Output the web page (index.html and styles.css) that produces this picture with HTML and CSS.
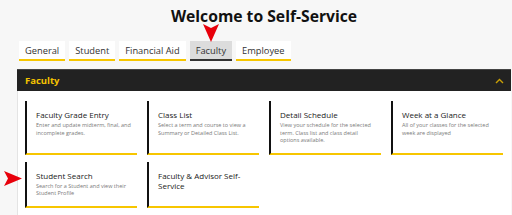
FILE: index.html
```html
<!DOCTYPE html>
<html lang="en">
<head>
<meta charset="utf-8">
<title>Welcome to Self-Service</title>
<link rel="stylesheet" href="styles.css">
</head>
<body>
<h1 class="title">Welcome to Self-Service</h1>
<nav class="tabs">
  <a class="tab">General</a>
  <a class="tab">Student</a>
  <a class="tab">Financial Aid</a>
  <a class="tab active">Faculty</a>
  <a class="tab">Employee</a>
</nav>
<section class="panel">
  <header class="panel-head">
    <span class="panel-title">Faculty</span>
    <svg class="chevron" width="9" height="6" viewBox="0 0 9 6"><polyline points="1,5 4.5,1.5 8,5" fill="none" stroke="#c9a006" stroke-width="1.4"/></svg>
  </header>
  <div class="panel-body">
    <div class="card">
      <div class="card-title">Faculty Grade Entry</div>
      <div class="card-desc">Enter and update midterm, final, and<br>incomplete grades.</div>
    </div>
    <div class="card">
      <div class="card-title">Class List</div>
      <div class="card-desc">Select a term and course to view a<br>Summary or Detailed Class List.</div>
    </div>
    <div class="card">
      <div class="card-title">Detail Schedule</div>
      <div class="card-desc">View your schedule for the selected<br>term. Class list and class detail<br>options available.</div>
    </div>
    <div class="card">
      <div class="card-title">Week at a Glance</div>
      <div class="card-desc">All of your classes for the selected<br>week are displayed</div>
    </div>
    <div class="card">
      <div class="card-title">Student Search</div>
      <div class="card-desc">Search for a Student and view their<br>Student Profile</div>
    </div>
    <div class="card">
      <div class="card-title">Faculty &amp; Advisor Self-<br>Service</div>
    </div>
  </div>
</section>
<svg class="pointer pointer-down" width="16" height="18" viewBox="0 0 16 18"><polygon points="0,0 8,4 16,0 8,18" fill="#e8000b"/></svg>
<svg class="pointer pointer-right" width="18" height="16" viewBox="0 0 18 16"><polygon points="0,0 18,7.5 0,15 4,7.5" fill="#e8000b"/></svg>
</body>
</html>
```

FILE: styles.css
```css
html, body {
  margin: 0;
  padding: 0;
}
body {
  background: #f7f7f7;
  font-family: "Open Sans", "Liberation Sans", sans-serif;
  color: #222;
  width: 512px;
  height: 215px;
  overflow: hidden;
  position: relative;
}
.title {
  margin: 6px 0 0 17px;
  width: 494px;
  font-size: 15.7px;
  line-height: 20px;
  font-weight: 700;
  text-align: center;
  color: #111;
}
.tabs {
  display: flex;
  gap: 4px;
  margin: 15px 0 0 19px;
}
.tab {
  display: block;
  background: #fff;
  padding: 3px 6px 2px;
  font-size: 9.3px;
  line-height: 13px;
  color: #333;
  border-bottom: 2px solid #f7c600;
}
.tab.active {
  background: #dcdcdc;
  border-bottom-color: #333;
}
.panel {
  margin: 8px 0 0 17px;
  width: 494px;
}
.panel-head {
  height: 22px;
  box-sizing: border-box;
  background: #222;
  border-top: 1px solid #444;
  display: flex;
  align-items: center;
  justify-content: space-between;
  padding: 0 7px 0 8px;
}
.panel-title {
  color: #f5c400;
  font-weight: 700;
  font-size: 9.5px;
}
.panel-body {
  background: #fff;
  border-left: 1px solid #e4e4e4;
  padding: 10px 7px 9px 7px;
  display: grid;
  grid-template-columns: repeat(4, 112px);
  column-gap: 10px;
  row-gap: 7px;
}
.card {
  background: #fff;
  border-left: 2px solid #111;
  border-bottom: 2px solid #f7c600;
  padding: 9px 2px 8px 9px;
  min-width: 0;
}
.card-title {
  font-size: 8px;
  line-height: 10px;
  color: #222;
  margin-bottom: 2px;
  white-space: nowrap;
}
.card-desc {
  font-size: 5.5px;
  line-height: 7.5px;
  color: #7a7a7a;
  white-space: nowrap;
}
.pointer {
  position: absolute;
}
.pointer-down {
  left: 203px;
  top: 24px;
}
.pointer-right {
  left: 4px;
  top: 171px;
}
```
